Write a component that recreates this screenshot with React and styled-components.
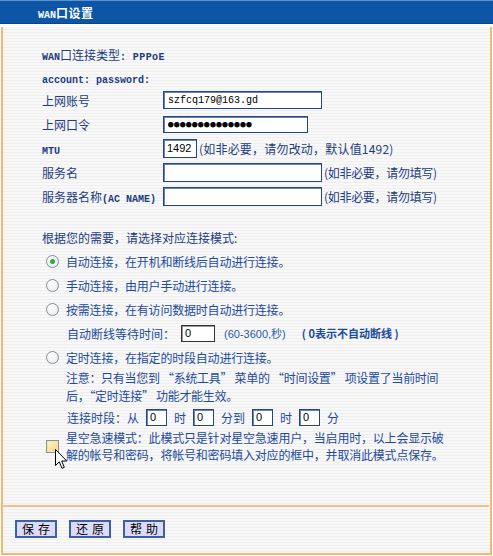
import React from 'react'
import styled, { createGlobalStyle } from 'styled-components'

const GlobalStyle = createGlobalStyle`
body{
  margin:0;
  background:#ffffff;
  font-family:"Noto Sans CJK SC", "Liberation Sans", sans-serif;
}
`

const Page = styled.div`
width:493px;
height:556px;
overflow:hidden;
background:#ffffff;
`

const Header = styled.div`
height:24px;
box-sizing:border-box;
background:#0c56a5;
border-top:1px solid #5d92d2;
border-bottom:1px solid #0a4688;
display:flex;
align-items:center;
padding-left:38px;
`

const Title = styled.h1`
margin:0;
font-size:12px;
font-weight:bold;
color:#ffffff;
letter-spacing:0.5px;
`

const Mono = styled.span`
font-family:"Liberation Mono", monospace;
font-size:10px;
font-weight:bold;
letter-spacing:${p => p.wide ? '0.4px' : '0'};
`

const Panel = styled.div`
margin:3px 0 0 1px;
width:491px;
height:528px;
box-sizing:border-box;
border:2px solid #f4b870;
border-top:none;
background:repeating-linear-gradient(to bottom,#f8f8f8 0,#f8f8f8 2px,#efefef 2px,#efefef 3px);
display:flex;
flex-direction:column;
`

const Form = styled.div`
padding:15px 0 0 39px;
display:flex;
flex-direction:column;
`

const FieldRow = styled.div`
height:${p => p.h || 24}px;
display:grid;
grid-template-columns:121px auto;
align-items:center;
color:#213c7f;
font-size:12px;
`

const Label = styled.span`
white-space:nowrap;
`

const Field = styled.div`
display:flex;
align-items:center;
gap:2px;
`

const Input = styled.input`
box-sizing:border-box;
width:${p => p.w}px;
height:${p => p.h || 18}px;
border:1px solid #24448a;
box-shadow:inset 1px 1px 0 #6b84b8;
background:#ffffff;
padding:0 0 0 4px;
margin:0;
font-family:${p => p.dots ? '"DejaVu Sans Mono", monospace' : '"Liberation Mono", monospace'};
font-size:${p => p.dots ? '9px' : '10px'};
letter-spacing:${p => p.dots ? '0.6px' : '0'};
color:#000000;
outline:none;
`

const NumInput = styled.input`
box-sizing:border-box;
width:${p => p.w}px;
height:${p => p.h || 18}px;
border:1px solid ${p => p.dark ? '#333333' : '#24448a'};
box-shadow:inset 1px 1px 0 ${p => p.dark ? '#999999' : '#6b84b8'};
background:#ffffff;
padding:0 0 0 3px;
margin:0;
font-family:"Liberation Sans", sans-serif;
font-size:11px;
color:#000000;
outline:none;
`

const Hint = styled.span`
font-size:12px;
color:#213c7f;
white-space:nowrap;
letter-spacing:${p => p.ls || '-0.3px'};
`

const Modes = styled.div`
margin-top:17px;
display:flex;
flex-direction:column;
color:#1c4a9e;
font-size:12px;
`

const Prompt = styled.div`
height:24px;
display:flex;
align-items:center;
padding-left:39px;
color:#213c7f;
`

const RadioRow = styled.label`
height:24px;
display:flex;
align-items:center;
padding-left:43px;
gap:7px;
letter-spacing:-0.2px;
`

const Radio = styled.span`
width:13px;
height:13px;
box-sizing:border-box;
border-radius:50%;
border:1px solid #7d8d9d;
background:radial-gradient(circle at 40% 35%,#ffffff 0,#e6e6e6 100%);
display:flex;
align-items:center;
justify-content:center;
flex-shrink:0;
&::after{
  content:'';
  width:5px;
  height:5px;
  border-radius:50%;
  background:${p => p.checked ? '#2fae3a' : 'transparent'};
}
`

const SubRow = styled.div`
height:24px;
display:flex;
align-items:center;
padding-left:${p => p.pad || 64}px;
gap:${p => p.gap || 6}px;
white-space:nowrap;
`

const Muted = styled.span`
color:#2b58a8;
font-family:"Liberation Sans","Noto Sans CJK SC",sans-serif;
font-size:11px;
margin-left:3px;
`

const Strong = styled.span`
color:#1c4a9e;
font-weight:bold;
font-size:11px;
margin-left:10px;
`

const Note = styled.div`
padding-left:${p => p.pad || 63}px;
line-height:${p => p.lh || 18}px;
white-space:nowrap;
letter-spacing:${p => p.ls || '-0.3px'};
`

const CheckRow = styled.div`
position:relative;
display:flex;
align-items:center;
padding-left:43px;
gap:7px;
`

const Check = styled.span`
width:13px;
height:13px;
box-sizing:border-box;
border:1px solid #8b8f96;
background:linear-gradient(135deg,#fff6d4 0,#f4d47c 100%);
box-shadow:inset 0 0 0 1px #f8e6a8;
flex-shrink:0;
`

const CheckText = styled.div`
line-height:17px;
white-space:nowrap;
letter-spacing:-0.2px;
`

const Cursor = styled.svg`
position:absolute;
left:52px;
top:20px;
`

const Divider = styled.div`
margin-top:42px;
height:2px;
margin-right:1px;
background:#f4c088;
`

const Buttons = styled.div`
display:flex;
gap:12px;
padding:13px 0 0 12px;
`

const Button = styled.button`
width:42px;
height:18px;
box-sizing:border-box;
border:2px solid #3e5ea5;
background:#dcdcfa;
padding:0;
font-family:"Noto Sans CJK SC", sans-serif;
font-size:12px;
line-height:14px;
color:#000000;
letter-spacing:4px;
text-indent:4px;
cursor:pointer;
`

const App = () => {
  return (
    <Page>
      <GlobalStyle />
      <Header>
        <Title><Mono>WAN</Mono>口设置</Title>
      </Header>
      <Panel>
        <Form>
          <FieldRow h={24}>
            <Label><Mono>WAN</Mono>口连接类型<Mono wide>: PPPoE</Mono></Label>
          </FieldRow>
          <FieldRow h={22}>
            <Label><Mono>account: password:</Mono></Label>
          </FieldRow>
          <FieldRow>
            <Label>上网账号</Label>
            <Field><Input w={159} defaultValue="szfcq179@163.gd" /></Field>
          </FieldRow>
          <FieldRow>
            <Label>上网口令</Label>
            <Field><Input w={145} h={17} dots defaultValue="●●●●●●●●●●●●●●" /></Field>
          </FieldRow>
          <FieldRow>
            <Label><Mono>MTU</Mono></Label>
            <Field>
              <NumInput w={34} h={19} defaultValue="1492" />
              <Hint ls="0.2px">(如非必要，请勿改动，默认值1492)</Hint>
            </Field>
          </FieldRow>
          <FieldRow>
            <Label>服务名</Label>
            <Field>
              <Input w={159} h={19} />
              <Hint>(如非必要，请勿填写)</Hint>
            </Field>
          </FieldRow>
          <FieldRow>
            <Label>服务器名称<Mono>(AC NAME)</Mono></Label>
            <Field>
              <Input w={159} h={19} />
              <Hint>(如非必要，请勿填写)</Hint>
            </Field>
          </FieldRow>
        </Form>

        <Modes>
          <Prompt>根据您的需要，请选择对应连接模式:</Prompt>
          <RadioRow><Radio checked />自动连接，在开机和断线后自动进行连接。</RadioRow>
          <RadioRow><Radio />手动连接，由用户手动进行连接。</RadioRow>
          <RadioRow><Radio />按需连接，在有访问数据时自动进行连接。</RadioRow>
          <SubRow>
            自动断线等待时间：
            <NumInput w={34} h={17} dark defaultValue="0" />
            <Muted>(60-3600,秒)</Muted>
            <Strong>( 0表示不自动断线 )</Strong>
          </SubRow>
          <RadioRow><Radio />定时连接，在指定的时段自动进行连接。</RadioRow>
          <Note>
            注意：只有当您到 “系统工具” 菜单的 “时间设置” 项设置了当前时间<br />
            后，“定时连接” 功能才能生效。
          </Note>
          <SubRow gap={7}>
            连接时段：从
            <NumInput w={21} h={17} defaultValue="0" />时
            <NumInput w={21} h={17} defaultValue="0" />分到
            <NumInput w={21} h={17} defaultValue="0" />时
            <NumInput w={21} h={17} defaultValue="0" />分
          </SubRow>
          <CheckRow>
            <Check />
            <CheckText>
              星空急速模式：此模式只是针对星空急速用户，当启用时，以上会显示破<br />
              解的帐号和密码，将帐号和密码填入对应的框中，并取消此模式点保存。
            </CheckText>
            <Cursor width="13" height="21" viewBox="0 0 13 21">
              <path d="M0.5 0.5 L0.5 16.5 L4.3 12.8 L7 19.3 L9.3 18.3 L6.7 12 L11.8 12 Z" fill="#ffffff" stroke="#000000" strokeWidth="1" strokeLinejoin="miter" />
            </Cursor>
          </CheckRow>
        </Modes>

        <Divider />
        <Buttons>
          <Button>保存</Button>
          <Button>还原</Button>
          <Button>帮助</Button>
        </Buttons>
      </Panel>
    </Page>
  )
}

export default App
